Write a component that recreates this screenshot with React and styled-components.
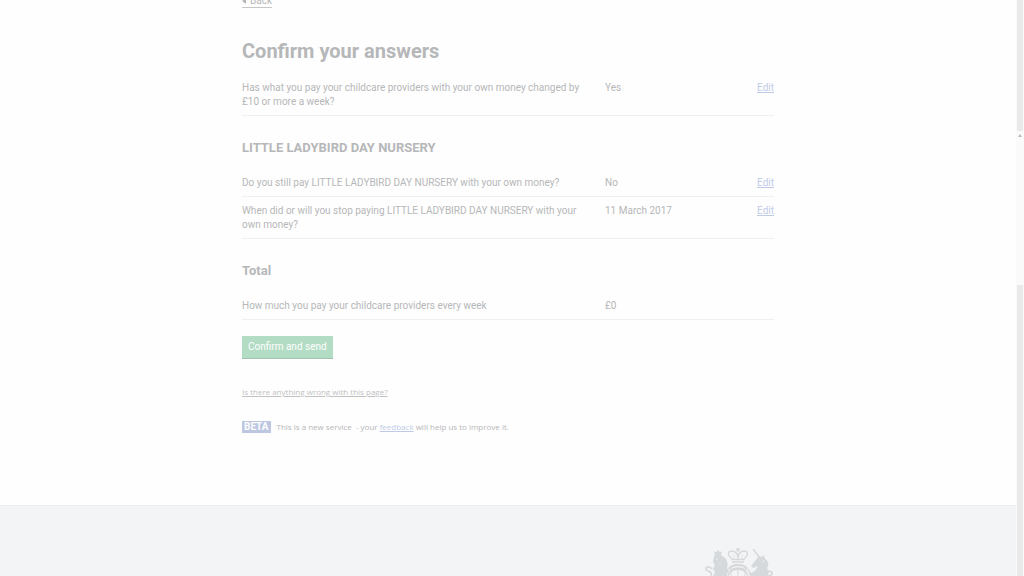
import React from "react";
import styled, { createGlobalStyle } from "styled-components";

const Global = createGlobalStyle`
  * { box-sizing: border-box; }
  html, body { margin: 0; padding: 0; }
  body { background: #fefefe; color: #b6b7b8; font-family: Roboto, "Liberation Sans", sans-serif; font-size: 10px; line-height: 14px; }
  a { color: #bfcbe6; }
`;

const Screen = styled.div`
  display: flex;
  height: 100vh;
  overflow: hidden;
`;

const Page = styled.div`
  flex: 1;
  min-width: 0;
  display: flex;
  flex-direction: column;
`;

const Content = styled.main`
  width: 100%;
  max-width: 532px;
  margin: -5px auto 71px;
`;

const BackLink = styled.a`
  display: flex;
  align-items: center;
  gap: 4px;
  width: fit-content;
  border-bottom: 1px solid #c6c6c6;
  color: #b6b7b8;
  line-height: 12px;
  text-decoration: none;
`;

const BackArrow = styled.svg`
  width: 4px;
  height: 6px;
  fill: currentColor;
`;

const Title = styled.h1`
  margin: 31px 0 11px;
  font-size: 20px;
  line-height: 24px;
  font-weight: 700;
`;

const Heading = styled.h2`
  margin: 22px 0 11px;
  font-size: 13px;
  line-height: 20px;
  font-weight: 700;
`;

const Answers = styled.dl`
  margin: 0;
`;

const Row = styled.div`
  display: grid;
  grid-template-columns: 347px 1fr auto;
  column-gap: 16px;
  padding: 7px 0 6px;
  border-bottom: 1px solid #eeefef;
`;

const Question = styled.dt``;

const Answer = styled.dd`
  margin: 0;
`;

const Button = styled.button`
  display: block;
  margin: 16px 0 27px;
  padding: 4px 6px;
  border: 0;
  background: #b3dcc5;
  box-shadow: 0 1px 0 #a3c0b1;
  color: #fefefe;
  font: inherit;
`;

const ReportLink = styled.a`
  display: block;
  width: fit-content;
  font-family: "Open Sans", sans-serif;
  font-size: 8px;
  && { color: #bfc1c2; }
`;

const Phase = styled.p`
  display: flex;
  align-items: center;
  gap: 6px;
  margin: 21px 0 0;
  font-family: "Open Sans", sans-serif;
  font-size: 8px;
`;

const Tag = styled.strong`
  padding: 0 2px;
  background: #bdc7e1;
  color: #fefefe;
  font-family: Roboto, sans-serif;
  font-size: 10px;
  line-height: 12px;
`;

const Footer = styled.footer`
  flex: 1;
  border-top: 1px solid #ecedee;
  background: #f3f4f5;
`;

const FooterInner = styled.div`
  display: flex;
  justify-content: flex-end;
  width: 100%;
  max-width: 532px;
  margin: 0 auto;
  padding-top: 41px;
`;

const Crest = styled.svg`
  width: 70px;
  height: 60px;
  color: #d6d9db;
`;

const ScrollTrack = styled.div`
  display: flex;
  flex-direction: column;
  width: 8px;
  padding: 0 1px;
  background: #fafafa;
`;

const Thumb = styled.div`
  flex: ${(p) => p.$grow} 0 0;
  background: #e9e9e9;
`;

const Gap = styled.div`
  flex: 151 0 0;
  display: flex;
  justify-content: center;
  padding-top: 3px;
`;

const UpArrow = styled.svg`
  width: 4px;
  height: 3px;
  fill: #b9b9b9;
`;

function Item({ question, answer, editable }) {
  return (
    <Row>
      <Question>{question}</Question>
      <Answer>{answer}</Answer>
      {editable && (
        <Answer>
          <a href="#edit">Edit</a>
        </Answer>
      )}
    </Row>
  );
}

function RoyalCrest() {
  return (
    <Crest viewBox="0 0 70 60" fill="none" stroke="currentColor" aria-hidden="true">
      {/* crown */}
      <path d="M34 1v4M32 2.500h4" strokeWidth="1.500" />
      <path d="M28 12C21 6 26 3 30 4.500c3 1 4 3 4 7 0-4 1-6 4-7 4-1.500 9 1.500 2 7.500" strokeWidth="1.400" />
      <path d="M27.500 12.500h13M28 15h12" strokeWidth="1.600" />
      <path d="M30 8v3M38 8v3" strokeDasharray="1 1" />
      {/* garter and shield */}
      <circle cx="34" cy="31" r="13" strokeWidth="2" strokeDasharray="2 1" />
      <circle cx="34" cy="31" r="10" strokeWidth="1.500" />
      <path d="M27 22h14v14q-7 7-14 0zM34 22v17M27 30h14" />
      <path d="M25 22c2-4 6-4 9-4s7 0 9 4M26 25c3-4 13-4 16 0" strokeWidth="2" />
      {/* lion */}
      <path d="M10 4l2 1.500L14 3l2 2.500L18 4l-1 5h-6z" fill="currentColor" stroke="none" />
      <path d="M10 9c3-2 8-1 11 2 3 3 3 7 2 10l2 4-2 2 1 18H9c2-7 0-11-1-13l3-7-2-3 2-4-2-3z" fill="currentColor" stroke="none" />
      <path d="M12 12l2 1M15 16l2 1" stroke="#e8eaeb" />
      <path d="M11 38C4 34 9 29 7 26c-1-3-6-1-5-5 1-2 5-1 6 1" strokeWidth="1.700" />
      {/* unicorn */}
      <path d="M49 2l7 9" strokeWidth="1.400" />
      <path d="M55 9l3 1 2-2 1 4c4 2 4 6 2 9l2 5-4 5 1 14H48l2-13-5-5 6-3 3-5-5 2-2-2 4-5z" fill="currentColor" stroke="none" />
      <path d="M55 13h1M60 13l-1 3" stroke="#e8eaeb" />
      <path d="M60 38c7-3 2-8 3-12 1-3 6-2 5 1-1 2-3 2-4 1" strokeWidth="1.700" />
    </Crest>
  );
}

export default function App() {
  return (
    <Screen>
      <Global />
      <Page>
        <Content>
          <BackLink href="#back">
            <BackArrow viewBox="0 0 4 6"><path d="M4 0v6L0 3z" /></BackArrow>
            Back
          </BackLink>
          <Title>Confirm your answers</Title>
          <Answers>
            <Item question="Has what you pay your childcare providers with your own money changed by £10 or more a week?" answer="Yes" editable />
          </Answers>
          <Heading>LITTLE LADYBIRD DAY NURSERY</Heading>
          <Answers>
            <Item question="Do you still pay LITTLE LADYBIRD DAY NURSERY with your own money?" answer="No" editable />
            <Item question="When did or will you stop paying LITTLE LADYBIRD DAY NURSERY with your own money?" answer="11 March 2017" editable />
          </Answers>
          <Heading>Total</Heading>
          <Answers>
            <Item question="How much you pay your childcare providers every week" answer="£0" />
          </Answers>
          <Button type="button">Confirm and send</Button>
          <ReportLink href="#report">Is there anything wrong with this page?</ReportLink>
          <Phase>
            <Tag>BETA</Tag>
            <span>This is a new service &nbsp;- your <a href="#feedback">feedback</a> will help us to improve it.</span>
          </Phase>
        </Content>
        <Footer>
          <FooterInner>
            <RoyalCrest />
          </FooterInner>
        </Footer>
      </Page>
      <ScrollTrack aria-hidden="true">
        <Thumb $grow={131} />
        <Gap><UpArrow viewBox="0 0 4 3"><path d="M2 0l2 3H0z" /></UpArrow></Gap>
        <Thumb $grow={291} />
      </ScrollTrack>
    </Screen>
  );
}
